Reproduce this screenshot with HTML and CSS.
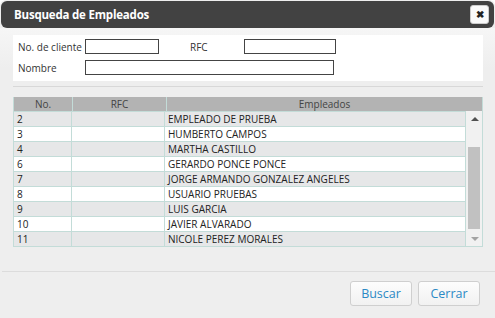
FILE: index.html
```html
<!DOCTYPE html>
<html lang="es">
<head>
  <meta charset="UTF-8" />
  <title>Busqueda de Empleados</title>
  <link rel="stylesheet" href="styles.css">
</head>
<body>
  <div class="dialog">
    <div class="titlebar">
      <span class="title">Busqueda de Empleados</span>
      <button class="close">&#10006;</button>
    </div>

    <div class="content">
      <div class="filters">
        <div class="row">
          <label class="lbl">No. de cliente</label>
          <input class="inp inp-short" type="text">
          <label class="lbl lbl-rfc">RFC</label>
          <input class="inp inp-rfc" type="text">
        </div>
        <div class="row">
          <label class="lbl">Nombre</label>
          <input class="inp inp-long" type="text">
        </div>
      </div>
      <div class="sep"></div>

      <div class="grid">
        <div class="grid-head">
          <div class="c-no">No.</div>
          <div class="c-rfc">RFC</div>
          <div class="c-emp">Empleados</div>
        </div>
        <div class="grid-body">
          <div class="rows" id="rows"></div>
          <div class="scroll">
            <span class="arr up"></span>
            <span class="thumb"></span>
            <span class="arr down"></span>
          </div>
        </div>
      </div>
    </div>

    <div class="footer">
      <button class="btn">Buscar</button>
      <button class="btn">Cerrar</button>
    </div>
  </div>

  <script>
    const empleados = [
      [2, "EMPLEADO DE PRUEBA"],
      [3, "HUMBERTO CAMPOS"],
      [4, "MARTHA CASTILLO"],
      [6, "GERARDO PONCE PONCE"],
      [7, "JORGE ARMANDO GONZALEZ ANGELES"],
      [8, "USUARIO PRUEBAS"],
      [9, "LUIS GARCIA"],
      [10, "JAVIER ALVARADO"],
      [11, "NICOLE PEREZ MORALES"]
    ];
    const rowsEl = document.getElementById('rows');
    empleados.forEach((e, i) => {
      const r = document.createElement('div');
      r.className = 'grow' + (i % 2 === 0 ? ' alt' : '');
      r.innerHTML = '<div class="c-no">' + e[0] + '</div><div class="c-rfc"></div><div class="c-emp">' + e[1] + '</div>';
      rowsEl.appendChild(r);
    });
  </script>
</body>
</html>
```

FILE: styles.css
```css
body {
  margin: 0;
  background: #fff;
  font-family: 'Open Sans', 'DejaVu Sans', sans-serif;
  font-size: 10px;
  color: #333;
}

.dialog {
  width: 495px;
  height: 318px;
  background: #eeeeee;
  border-radius: 6px 6px 0 0;
  display: flex;
  flex-direction: column;
  overflow: hidden;
}

.titlebar {
  height: 27px;
  margin: 1px 1px 0 1px;
  background: #424242;
  border-radius: 6px;
  display: flex;
  align-items: center;
  justify-content: space-between;
  padding: 0 5px 0 13px;
}

.title {
  color: #fff;
  font-weight: bold;
  font-size: 11.5px;
  letter-spacing: -0.2px;
}

.close {
  width: 19px;
  height: 19px;
  padding: 0;
  border: 1px solid #ccc;
  border-radius: 3px;
  background: #fafafa;
  color: #222;
  font-size: 10px;
  font-weight: bold;
  line-height: 17px;
  text-align: center;
}

.content {
  flex: 1;
  padding: 7px 12px 0 13px;
  background: linear-gradient(#f6f6f6, #eeeeee 40px);
}

.filters {
  background: #fff;
  height: 46px;
  padding: 4px 0 0 5px;
  box-sizing: border-box;
}

.row {
  display: flex;
  align-items: center;
  height: 15px;
  margin-bottom: 6px;
}

.lbl {
  width: 67px;
  color: #333;
}

.lbl-rfc {
  width: 54px;
  margin-left: 31px;
}

.inp {
  height: 15px;
  box-sizing: border-box;
  border: 1px solid #444;
  margin: 0;
  padding: 0 2px;
  background: #fff;
}

.inp-short { width: 74px; }
.inp-rfc { width: 92px; }
.inp-long { width: 249px; }

.sep {
  height: 1px;
  background: #d8d8d8;
  margin-top: 5px;
}

.grid {
  margin-top: 10px;
  width: 468px;
  border: 1px solid #c3dcd8;
  border-top: none;
}

.grid-head {
  display: flex;
  height: 14px;
  background: #b3b3b3;
  color: #444;
  line-height: 14px;
  text-align: center;
}

.grid-head > div {
  border-right: 1px solid #c3dcd8;
}

.grid-head .c-emp {
  border-right: none;
  flex: 1;
}

.c-no { width: 58px; }
.c-rfc { width: 93px; }
.c-emp { width: 297px; }

.grid-body {
  display: flex;
}

.rows {
  width: 451px;
  border-right: 1px solid #c3dcd8;
}

.grow {
  display: flex;
  height: 14px;
  line-height: 14px;
  background: #fff;
  border-top: 1px solid #c3dcd8;
  color: #222;
}

.grow.alt {
  background: #e6e7e8;
}

.grow > div {
  border-right: 1px solid #c3dcd8;
  padding-left: 3px;
  box-sizing: border-box;
}

.grow .c-emp {
  border-right: none;
}

.scroll {
  flex: 1;
  background: #f1f1f1;
  position: relative;
}

.thumb {
  position: absolute;
  left: 2px;
  right: 2px;
  top: 36px;
  height: 82px;
  background: #c1c1c1;
}

.arr {
  position: absolute;
  left: 5px;
  width: 0;
  height: 0;
  border-left: 4px solid transparent;
  border-right: 4px solid transparent;
}

.arr.up {
  top: 6px;
  border-bottom: 4px solid #505050;
}

.arr.down {
  bottom: 5px;
  border-top: 4px solid #a3a3a3;
}

.footer {
  height: 47px;
  border-top: 1px solid #dcdcdc;
  margin-left: 2px;
  display: flex;
  justify-content: flex-end;
  align-items: flex-start;
  gap: 6px;
  padding: 9px 15px 0 0;
  box-sizing: border-box;
}

.btn {
  width: 62px;
  height: 25px;
  border: 1px solid #cfcfcf;
  border-radius: 3px;
  background: linear-gradient(#fdfdfd, #f1f1f1);
  color: #2b89c5;
  font-family: 'Open Sans', 'DejaVu Sans', sans-serif;
  font-size: 12.5px;
}
```
